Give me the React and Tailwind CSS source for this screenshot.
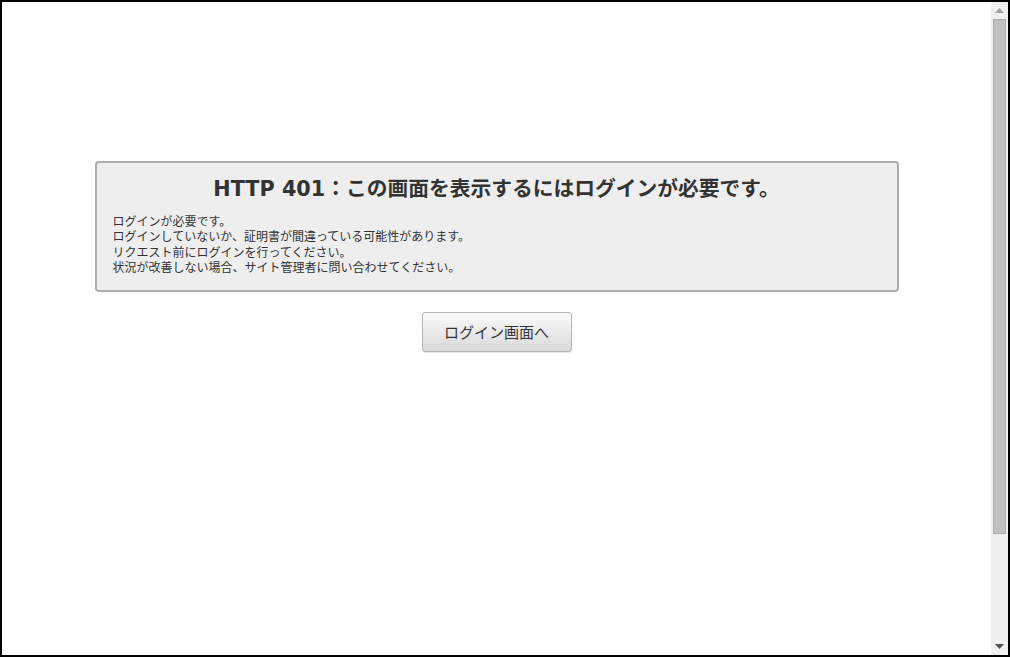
export default function App() {
  const jp = { fontFamily: '"Noto Sans CJK JP", "Noto Sans", sans-serif' };
  const title = { fontFamily: '"DejaVu Sans", "Noto Sans CJK JP", sans-serif' };
  return (
    <div className="w-[1010px] h-[657px] border-2 border-black bg-white flex overflow-hidden" style={jp}>
      <main className="flex-1 flex flex-col items-center pt-[159px]">
        <div className="w-[804px] border-2 border-[#adadad] rounded-[4px] bg-[#eeeeee] pt-[12px] pb-[16px] px-[16px] text-[#333]">
          <h1 className="text-center text-[20.75px] leading-[28px] font-bold text-[#333]" style={title}>
            HTTP 401：この画面を表示するにはログインが必要です。
          </h1>
          <div className="mt-[10px] text-[12px] leading-[15.3px]">
            <p>ログインが必要です。</p>
            <p>ログインしていないか、証明書が間違っている可能性があります。</p>
            <p>リクエスト前にログインを行ってください。</p>
            <p>状況が改善しない場合、サイト管理者に問い合わせてください。</p>
          </div>
        </div>
        <button className="mt-[20px] w-[150px] h-[40px] rounded-[3px] border border-[#b4b4b4] bg-gradient-to-b from-[#fbfbfb] to-[#d9d9d9] text-[15px] text-[#333] shadow-[0_1px_1px_rgba(0,0,0,0.1)]">
          ログイン画面へ
        </button>
      </main>
      <div className="w-[17px] h-full bg-[#f0f0f0] flex flex-col items-center">
        <div className="h-[17px] w-full flex items-center justify-center">
          <svg width="9" height="5" viewBox="0 0 9 5"><path d="M0 5 L4.5 0 L9 5 Z" fill="#a3a3a3" /></svg>
        </div>
        <div className="w-[13px] h-[515px] bg-[#c1c1c1] border border-[#ababab]" />
        <div className="flex-1" />
        <div className="h-[17px] w-full flex items-center justify-center">
          <svg width="9" height="5" viewBox="0 0 9 5"><path d="M0 0 L9 0 L4.5 5 Z" fill="#505050" /></svg>
        </div>
      </div>
    </div>
  );
}
